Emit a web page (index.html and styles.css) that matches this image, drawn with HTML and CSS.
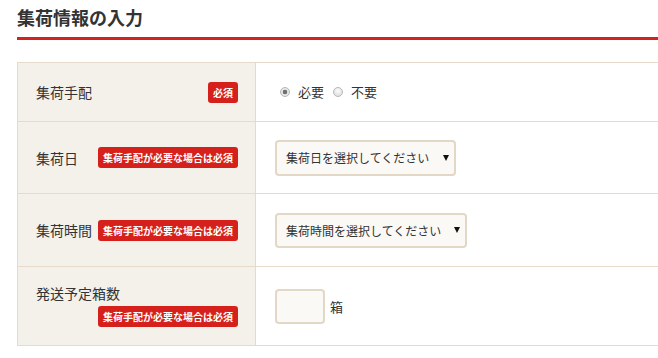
FILE: index.html
```html
<!DOCTYPE html>
<html lang="ja">
<head>
<meta charset="utf-8">
<link rel="stylesheet" href="styles.css">
</head>
<body>
<div class="page">
  <h2 class="title">集荷情報の入力</h2>
  <table class="form">
    <tr class="row1">
      <th><div class="head"><span class="label">集荷手配</span><span class="badge">必須</span></div></th>
      <td>
        <div class="radios">
          <label class="radio"><input type="radio" name="pickup" checked><span>必要</span></label>
          <label class="radio"><input type="radio" name="pickup"><span>不要</span></label>
        </div>
      </td>
    </tr>
    <tr class="row2">
      <th><div class="head"><span class="label">集荷日</span><span class="badge">集荷手配が必要な場合は必須</span></div></th>
      <td><div class="select"><select><option>集荷日を選択してください</option></select></div></td>
    </tr>
    <tr class="row3">
      <th><div class="head"><span class="label">集荷時間</span><span class="badge">集荷手配が必要な場合は必須</span></div></th>
      <td><div class="select wide"><select><option>集荷時間を選択してください</option></select></div></td>
    </tr>
    <tr class="row4">
      <th><div class="head stack"><span class="label">発送予定箱数</span><span class="badge">集荷手配が必要な場合は必須</span></div></th>
      <td><div class="qty"><input type="text" class="box"><span class="unit">箱</span></div></td>
    </tr>
  </table>
</div>
</body>
</html>
```
FILE: styles.css
```css
html, body {
  margin: 0;
  padding: 0;
  background: #fff;
  overflow: hidden;
}
body {
  font-family: "Noto Sans CJK JP", "Noto Sans", sans-serif;
  color: #333;
}
.page {
  padding: 0 0 0 17px;
  width: 720px;
}
.title {
  margin: 0;
  padding: 5px 0 8px;
  font-size: 18px;
  line-height: 24px;
  font-weight: bold;
  color: #333;
  border-bottom: 3px solid #d3231d;
}
.form {
  margin-top: 22px;
  border-collapse: collapse;
  width: 720px;
}
.form th, .form td {
  border: 1px solid #e6dacb;
  padding: 0;
  vertical-align: middle;
}
.form th {
  width: 238px;
  background: #f4f0ea;
  text-align: left;
  font-weight: normal;
  padding: 0 17px 0 18px;
  box-sizing: border-box;
}
.form td {
  padding: 0 0 0 19px;
  background: #fff;
}
.row1 { height: 59px; }
.row2 { height: 72px; }
.row3 { height: 73px; }
.row4 { height: 79px; }
.head {
  display: flex;
  align-items: center;
  justify-content: space-between;
}
.head.stack {
  flex-direction: column;
  align-items: flex-start;
  gap: 3px;
  margin-top: -2px;
}
.head.stack .badge {
  align-self: flex-end;
}
.label {
  font-size: 14px;
  line-height: 20px;
  color: #333;
}
.badge {
  display: inline-block;
  background: #d6201c;
  color: #fff;
  font-size: 10px;
  font-weight: bold;
  line-height: 21px;
  height: 21px;
  padding: 0 5px;
  border-radius: 3px;
  white-space: nowrap;
}
.radios {
  display: flex;
  align-items: center;
  gap: 4px;
}
.radio {
  display: flex;
  align-items: center;
  font-size: 13px;
  line-height: 18px;
  color: #333;
}
.radio input {
  appearance: none;
  -webkit-appearance: none;
  width: 10px;
  height: 10px;
  margin: 0 8px 0 5px;
  border: 1px solid #b8b8b8;
  border-radius: 50%;
  background: radial-gradient(circle at 50% 35%, #fbfbfb, #d8d8d8);
  box-sizing: border-box;
}
.radio input:checked {
  background: radial-gradient(circle, #707070 0 2px, #e6e6e6 2.6px);
}
.select {
  display: inline-block;
  position: relative;
  width: 181px;
  height: 36px;
  border: 2px solid #e3d7c6;
  border-radius: 4px;
  background: #fbf9f6;
  box-sizing: border-box;
  vertical-align: middle;
}
.select.wide {
  width: 192px;
  height: 35px;
}
.select select {
  appearance: none;
  -webkit-appearance: none;
  border: 0;
  background: transparent;
  width: 100%;
  height: 100%;
  padding: 0 0 0 9px;
  font-family: "Noto Sans CJK JP", "Noto Sans", sans-serif;
  font-size: 12px;
  color: #333;
  outline: none;
}
.select::after {
  content: "";
  position: absolute;
  right: 5px;
  top: 50%;
  margin-top: -3px;
  border-left: 3.5px solid transparent;
  border-right: 3.5px solid transparent;
  border-top: 6px solid #111;
}
.qty {
  display: flex;
  align-items: center;
  gap: 5px;
}
.box {
  width: 50px;
  height: 35px;
  border: 2px solid #e3d7c6;
  border-radius: 4px;
  background: #fbf9f6;
  box-sizing: border-box;
  margin: 0;
}
.unit {
  font-size: 13px;
  color: #333;
}
```
